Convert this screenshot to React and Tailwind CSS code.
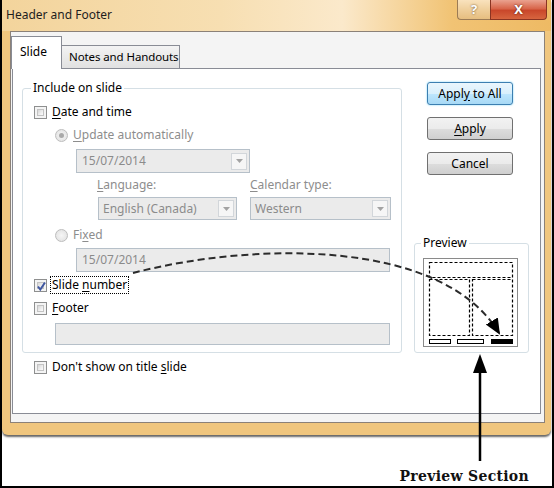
import React from 'react';

// small accelerator-key underline helper
const U = ({ children }) => <span className="underline underline-offset-2">{children}</span>;

function CheckBox({ checked }) {
  return (
    <span className="relative w-[13px] h-[13px] shrink-0 border border-[#8e8f8f] bg-[#f4f4f4] p-[2px] flex">
      <span className="flex-1 border border-[#c3c3c3] bg-[linear-gradient(135deg,#d6d6d6_0%,#efefef_60%,#fbfbfb_100%)]" />
      {checked && (
        <svg className="absolute left-[1px] top-[1px]" width="11" height="11" viewBox="0 0 11 11">
          <path d="M2 5.5 L4.3 8.5 L9 1.5" fill="none" stroke="#3f56a0" strokeWidth="2" />
        </svg>
      )}
    </span>
  );
}

function Radio({ selected }) {
  return (
    <span className="w-[13px] h-[13px] shrink-0 rounded-full border border-[#bdbdbd] bg-[radial-gradient(circle,#f6f6f6_0%,#dedede_100%)] flex items-center justify-center">
      {selected && <span className="w-[5px] h-[5px] rounded-full bg-[#a9a9a9]" />}
    </span>
  );
}

function Arrow() {
  return (
    <span className="w-[16px] h-[17px] border border-[#d2d6da] bg-[#f6f6f6] flex items-center justify-center">
      <svg width="7" height="4" viewBox="0 0 7 4">
        <path d="M0 0 H7 L3.5 4 Z" fill="#a3a3a3" />
      </svg>
    </span>
  );
}

function Button({ children, primary }) {
  return (
    <button
      className={
        primary
          ? 'w-[86px] h-[23px] rounded-[3px] border border-[#3c7fb1] bg-[linear-gradient(#eaf6fd_0%,#d9f0fc_50%,#bee6fd_51%,#a7d9f5_100%)] shadow-[0_0_2px_#6fd0f5] text-[12px] leading-none'
          : 'w-[86px] h-[23px] rounded-[3px] border border-[#707070] bg-[linear-gradient(#f2f2f2_0%,#ebebeb_50%,#dddddd_51%,#cfcfcf_100%)] text-[12px] leading-none'
      }
    >
      {children}
    </button>
  );
}

export default function App() {
  return (
    <div className="relative w-[554px] h-[488px] bg-white border-x-2 border-b-2 border-black overflow-hidden font-['Noto_Sans',sans-serif] text-[12px] text-black whitespace-nowrap">
      {/* window */}
      <div className="w-[549px] h-[435px] rounded-b-[6px] bg-[#f0c67e] shadow-[0_2px_2px_rgba(0,0,0,0.6)] flex flex-col">
        <div className="h-[31px] flex justify-between items-start bg-[linear-gradient(90deg,#f3d49c_0%,#f7dfb2_40%,#fbe9cb_62%,#f1c374_82%,#eeba64_100%)]">
          <span className="pl-[4px] pt-[6px] text-[12px] text-[#1e1e1e]">Header and Footer</span>
          <div className="flex pr-[4px]">
            <span className="w-[33px] h-[20px] rounded-bl-[4px] border border-t-0 border-r-0 border-[#9b7b55] bg-[linear-gradient(#f9e2bd_0%,#efcf9c_50%,#e6be80_100%)] flex items-center justify-center text-[13px] font-bold text-white [text-shadow:0_0_2px_#5b4020]">
              ?
            </span>
            <span className="w-[57px] h-[20px] rounded-br-[4px] border border-t-0 border-[#8a3422] bg-[linear-gradient(#eaa28f_0%,#d8664b_45%,#c9472b_55%,#d7653f_100%)] flex items-center justify-center text-[13px] font-bold text-white [text-shadow:0_0_2px_#4a1408]">
              X
            </span>
          </div>
        </div>

        {/* client area */}
        <div className="ml-[8px] w-[535px] h-[392px] border border-[#8b8178] bg-[#f4f4f4] pt-[4px] pr-[2px] pb-[8px] flex flex-col">
          <div className="h-[32px] flex items-end">
            <div className="relative z-10 -mb-px w-[51px] h-[33px] border border-b-0 border-[#898c95] bg-white pl-[8px] pt-[8px] leading-[14px]">
              Slide
            </div>
            <div className="w-[118px] h-[23px] border border-l-0 border-b-0 border-[#898c95] bg-[linear-gradient(#f3f3f3,#e1e1e1)] pl-[7px] pt-[4px] leading-[14px] text-[11.5px] tracking-[-0.1px]">
              Notes and Handouts
            </div>
          </div>

          <div className="ml-[1px] w-[529px] h-[346px] border border-[#898c95] bg-white flex">
            {/* left column */}
            <div className="ml-[9px] mt-[12px] w-[380px]">
              <fieldset className="w-[380px] h-[272px] border border-[#d5dfe5] rounded-[3px]">
                <legend className="ml-[8px] px-[2px] leading-[14px]">Include on slide</legend>
                <div className="mt-[9px] h-[16px] pl-[11px] flex items-center gap-[5px]">
                  <CheckBox />
                  <span><U>D</U>ate and time</span>
                </div>
                <div className="mt-[7px] h-[16px] pl-[32px] flex items-center gap-[5px] text-[#8d8d8d]">
                  <Radio selected />
                  <span><U>U</U>pdate automatically</span>
                </div>
                <div className="mt-[6px] ml-[53px] w-[174px] h-[24px] border border-[#b6c0c9] bg-[#ebebeb] flex items-center justify-between pl-[5px] pr-[2px] text-[#8b8b8b]">
                  <span>15/07/2014</span>
                  <Arrow />
                </div>
                <div className="mt-[5px] ml-[74px] h-[14px] flex items-center leading-[14px] text-[#8d8d8d]">
                  <span className="w-[153px]"><U>L</U>anguage:</span>
                  <span><U>C</U>alendar type:</span>
                </div>
                <div className="mt-[5px] ml-[75px] flex gap-[13px] text-[#8b8b8b]">
                  <div className="w-[139px] h-[23px] border border-[#b6c0c9] bg-[#ebebeb] flex items-center justify-between pl-[4px] pr-[2px]">
                    <span>English (Canada)</span>
                    <Arrow />
                  </div>
                  <div className="w-[141px] h-[23px] border border-[#b6c0c9] bg-[#ebebeb] flex items-center justify-between pl-[4px] pr-[2px]">
                    <span>Western</span>
                    <Arrow />
                  </div>
                </div>
                <div className="mt-[7px] h-[16px] pl-[32px] flex items-center gap-[5px] text-[#8d8d8d]">
                  <Radio />
                  <span>Fi<U>x</U>ed</span>
                </div>
                <div className="mt-[5px] ml-[53px] w-[314px] h-[24px] border border-[#b6c0c9] bg-[#ebebeb] flex items-center pl-[5px] text-[#8b8b8b]">
                  15/07/2014
                </div>
                <div className="mt-[5px] h-[16px] pl-[11px] flex items-center">
                  <CheckBox checked />
                  <span className="ml-[3px] px-[1px] h-[18px] leading-[16px] border border-dotted border-black">
                    Slide <U>n</U>umber
                  </span>
                </div>
                <div className="mt-[7px] h-[16px] pl-[11px] flex items-center gap-[5px]">
                  <CheckBox />
                  <span><U>F</U>ooter</span>
                </div>
                <div className="mt-[7px] ml-[32px] w-[335px] h-[22px] border border-[#b6c0c9] bg-[#ebebeb]" />
              </fieldset>
              <div className="mt-[6px] h-[16px] pl-[12px] flex items-center gap-[5px]">
                <CheckBox />
                <span>Don't show on title <U>s</U>lide</span>
              </div>
            </div>

            {/* right column */}
            <div className="ml-[12px] mt-[13px] w-[115px] flex flex-col">
              <div className="ml-[13px] flex flex-col gap-[12px]">
                <Button primary>Appl<U>y</U> to All</Button>
                <Button><U>A</U>pply</Button>
                <Button>Cancel</Button>
              </div>
              <fieldset className="mt-[61px] w-[115px] h-[117px] border border-[#d5dfe5] rounded-[3px]">
                <legend className="ml-[6px] px-[2px] leading-[14px]">Preview</legend>
                <svg className="ml-[8px] mt-[8px]" width="95" height="89" viewBox="0 0 95 89">
                  <rect x="0.5" y="0.5" width="94" height="88" fill="#fff" stroke="#8a8a8a" />
                  <g fill="none" stroke="#000" strokeWidth="1.2" strokeDasharray="3 2">
                    <rect x="6.5" y="4.5" width="83" height="15" />
                    <rect x="6.5" y="21.5" width="40" height="56" />
                    <rect x="49.5" y="21.5" width="40" height="56" />
                  </g>
                  <rect x="6.5" y="81.5" width="21" height="4" fill="#fff" stroke="#000" />
                  <rect x="34.5" y="81.5" width="26" height="4" fill="#fff" stroke="#000" />
                  <rect x="68" y="81" width="22" height="5" fill="#000" />
                </svg>
              </fieldset>
            </div>
          </div>
        </div>
      </div>

      <div className="mt-[32px] pr-[23px] flex justify-end">
        <span className="font-['DejaVu_Serif',serif] font-bold text-[14px] leading-[18px] tracking-[0.3px] text-[#111]">
          Preview Section
        </span>
      </div>

      {/* annotation arrows drawn over the dialog */}
      <svg className="absolute left-0 top-0 pointer-events-none" width="554" height="488" viewBox="0 0 554 488">
        <defs>
          <marker id="head" markerUnits="userSpaceOnUse" markerWidth="18" markerHeight="16" refX="14" refY="8" orient="auto">
            <path d="M0 1 L16 8 L0 15 Z" fill="#000" />
          </marker>
        </defs>
        <path
          d="M131 273 C 250 242, 440 238, 497 333"
          fill="none"
          stroke="#2b2b2b"
          strokeWidth="2"
          strokeDasharray="7 4"
          markerEnd="url(#head)"
        />
        <path d="M478 354 L471 373 L485 373 Z" fill="#000" />
        <line x1="478" y1="370" x2="478" y2="461" stroke="#000" strokeWidth="2.5" />
      </svg>
    </div>
  );
}
